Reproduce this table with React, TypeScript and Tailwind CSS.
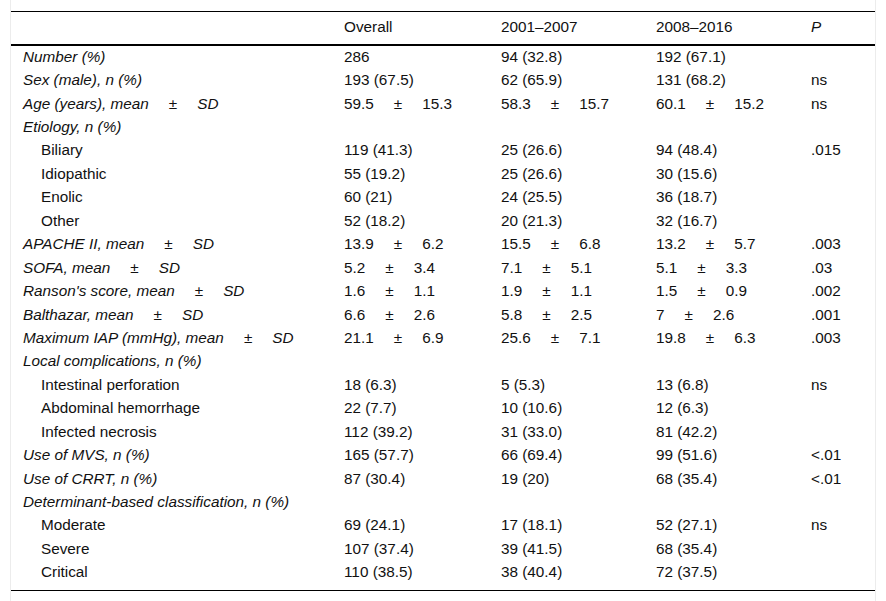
const PM = ({ a, b }: { a: string; b: string }) => (
  <span className="whitespace-nowrap">
    {a}
    <span className="mx-[20px]">±</span>
    {b}
  </span>
)

type Row = {
  label: React.ReactNode
  indent?: boolean
  cells?: React.ReactNode[]
}

const rows: Row[] = [
  { label: "Number (%)", cells: ["286", "94 (32.8)", "192 (67.1)", ""] },
  { label: "Sex (male), n (%)", cells: ["193 (67.5)", "62 (65.9)", "131 (68.2)", "ns"] },
  {
    label: <PM a="Age (years), mean" b="SD" />,
    cells: [<PM a="59.5" b="15.3" />, <PM a="58.3" b="15.7" />, <PM a="60.1" b="15.2" />, "ns"],
  },
  { label: "Etiology, n (%)" },
  { label: "Biliary", indent: true, cells: ["119 (41.3)", "25 (26.6)", "94 (48.4)", ".015"] },
  { label: "Idiopathic", indent: true, cells: ["55 (19.2)", "25 (26.6)", "30 (15.6)", ""] },
  { label: "Enolic", indent: true, cells: ["60 (21)", "24 (25.5)", "36 (18.7)", ""] },
  { label: "Other", indent: true, cells: ["52 (18.2)", "20 (21.3)", "32 (16.7)", ""] },
  {
    label: <PM a="APACHE II, mean" b="SD" />,
    cells: [<PM a="13.9" b="6.2" />, <PM a="15.5" b="6.8" />, <PM a="13.2" b="5.7" />, ".003"],
  },
  {
    label: <PM a="SOFA, mean" b="SD" />,
    cells: [<PM a="5.2" b="3.4" />, <PM a="7.1" b="5.1" />, <PM a="5.1" b="3.3" />, ".03"],
  },
  {
    label: <PM a="Ranson's score, mean" b="SD" />,
    cells: [<PM a="1.6" b="1.1" />, <PM a="1.9" b="1.1" />, <PM a="1.5" b="0.9" />, ".002"],
  },
  {
    label: <PM a="Balthazar, mean" b="SD" />,
    cells: [<PM a="6.6" b="2.6" />, <PM a="5.8" b="2.5" />, <PM a="7" b="2.6" />, ".001"],
  },
  {
    label: <PM a="Maximum IAP (mmHg), mean" b="SD" />,
    cells: [<PM a="21.1" b="6.9" />, <PM a="25.6" b="7.1" />, <PM a="19.8" b="6.3" />, ".003"],
  },
  { label: "Local complications, n (%)" },
  { label: "Intestinal perforation", indent: true, cells: ["18 (6.3)", "5 (5.3)", "13 (6.8)", "ns"] },
  { label: "Abdominal hemorrhage", indent: true, cells: ["22 (7.7)", "10 (10.6)", "12 (6.3)", ""] },
  { label: "Infected necrosis", indent: true, cells: ["112 (39.2)", "31 (33.0)", "81 (42.2)", ""] },
  { label: "Use of MVS, n (%)", cells: ["165 (57.7)", "66 (69.4)", "99 (51.6)", "<.01"] },
  { label: "Use of CRRT, n (%)", cells: ["87 (30.4)", "19 (20)", "68 (35.4)", "<.01"] },
  { label: "Determinant-based classification, n (%)" },
  { label: "Moderate", indent: true, cells: ["69 (24.1)", "17 (18.1)", "52 (27.1)", "ns"] },
  { label: "Severe", indent: true, cells: ["107 (37.4)", "39 (41.5)", "68 (35.4)", ""] },
  { label: "Critical", indent: true, cells: ["110 (38.5)", "38 (40.4)", "72 (37.5)", ""] },
]

const App = () => {
  return (
    <div className="w-[886px] h-[601px] bg-white font-['Liberation_Sans',Arial,sans-serif] text-[15.3px] text-[#111]">
      <div className="mx-[10px] h-full pt-[11px] border-x border-[#ececec]">
        <table className="w-full border-collapse table-fixed">
          <colgroup>
            <col className="w-[321px]" />
            <col className="w-[157px]" />
            <col className="w-[155px]" />
            <col className="w-[155px]" />
            <col />
          </colgroup>
          <thead>
            <tr className="h-[33px] border-t border-black border-b-2">
              <th></th>
              <th className="text-left font-normal px-3">Overall</th>
              <th className="text-left font-normal px-3">2001–2007</th>
              <th className="text-left font-normal px-3">2008–2016</th>
              <th className="text-left font-normal italic px-3">P</th>
            </tr>
          </thead>
          <tbody className="border-b border-black">
            {rows.map((r, i) => {
              const last = i === rows.length - 1
              return (
                <tr key={i} className={last ? "h-[30px] leading-[17px] align-top" : "h-[23.45px] leading-[17px]"}>
                  <td className={(r.indent ? "pl-[30px] pr-3" : "px-3 italic") + (last ? " pt-[3px]" : "")}>{r.label}</td>
                  {(r.cells ?? ["", "", "", ""]).map((c, j) => (
                    <td key={j} className={last ? "px-3 pt-[3px]" : "px-3"}>{c}</td>
                  ))}
                </tr>
              )
            })}
          </tbody>
        </table>
      </div>
    </div>
  )
}

export default App
